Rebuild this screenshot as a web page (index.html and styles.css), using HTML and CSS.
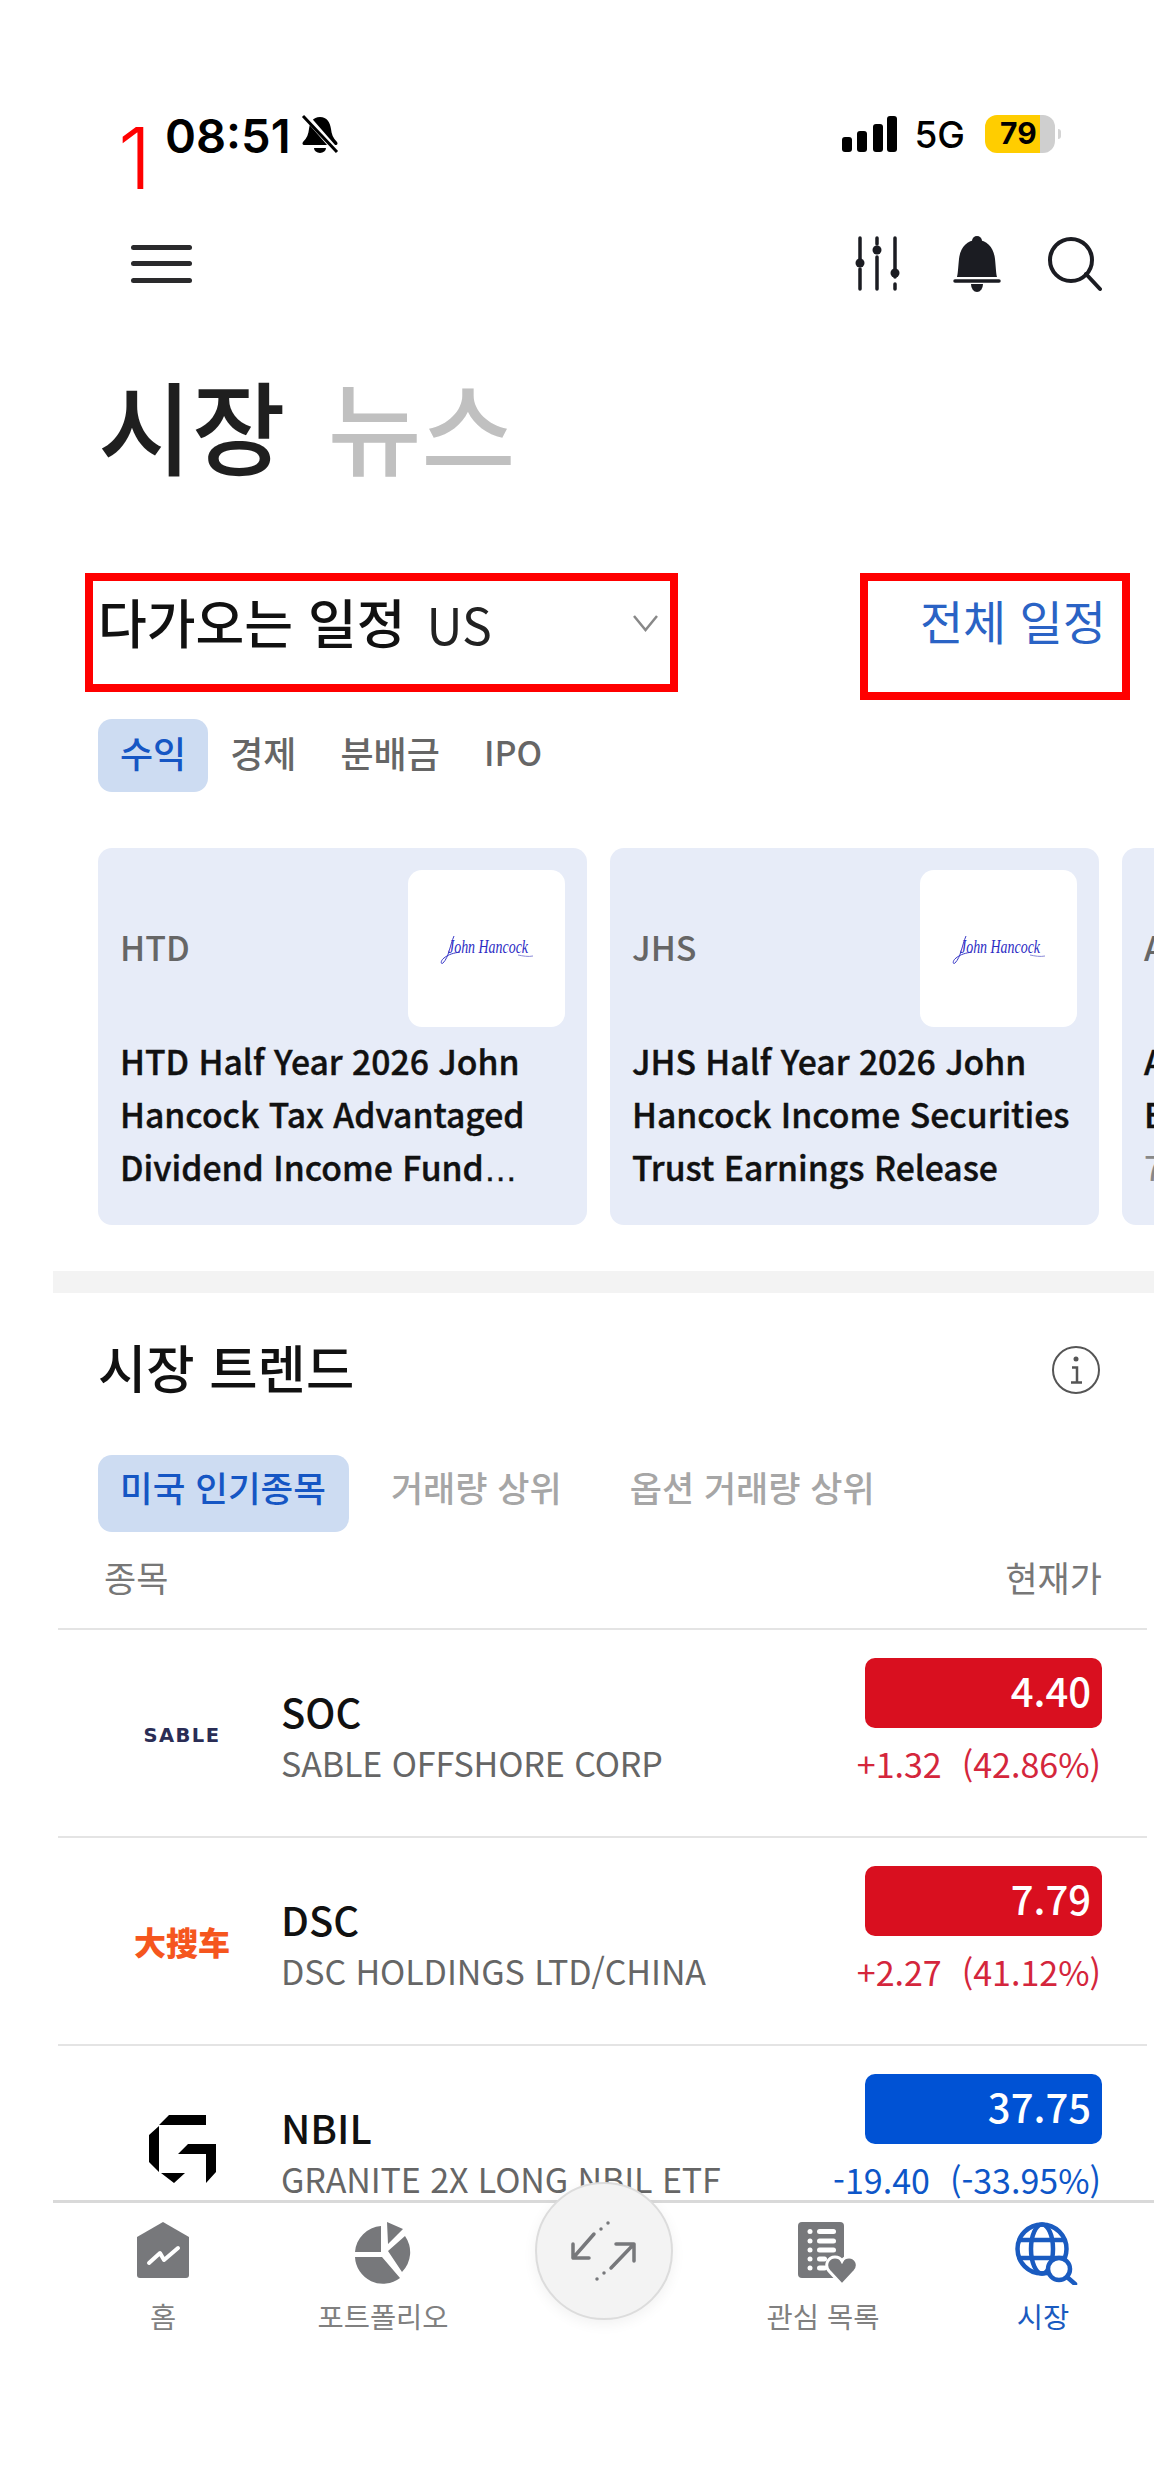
FILE: index.html
```html
<!DOCTYPE html>
<html lang="ko">
<head>
<meta charset="utf-8">
<title>시장</title>
<link rel="stylesheet" href="styles.css">
</head>
<body>
<div class="page">
  <div class="scroll">
    <div class="status">
      <div class="status-left">
        <span class="time">08:51</span>
        <svg class="muted" viewBox="0 0 38 40" width="38" height="40"><path d="M19 3c-7 0-10 5-11 12-.5 5-2 9-6 13-1 1-.5 3 1 3h32c1.500 0 2-2 1-3-4-4-5.500-8-6-13-1-7-4-12-11-12z" fill="#000"/><path d="M13 34a6 5 0 0 0 12 0z" fill="#000"/><path d="M3 0 37 39" stroke="#fff" stroke-width="6"/><path d="M2 2 36 38" stroke="#000" stroke-width="3"/></svg>
      </div>
      <div class="status-right">
        <svg viewBox="0 0 55 36" width="55" height="36"><rect x="0" y="21" width="10" height="15" rx="3"/><rect x="15" y="15" width="10" height="21" rx="3"/><rect x="31" y="8" width="10" height="28" rx="3"/><rect x="45" y="0" width="10" height="36" rx="3"/></svg>
        <span class="net">5G</span>
        <span class="battery">79</span>
      </div>
    </div>

    <div class="topbar">
      <div class="burger"><i></i><i></i><i></i></div>
      <div class="top-icons">
        <svg viewBox="0 0 46 57" width="46" height="57" fill="none" stroke="#1b1c22" stroke-width="3.500" stroke-linecap="round"><path d="M6 3V24M6 34V54M23 3V9M23 22V54M41 3V42M41 49V54"/><circle cx="6" cy="28" r="4.500" fill="#1b1c22" stroke="none"/><circle cx="23" cy="15" r="4.500" fill="#1b1c22" stroke="none"/><circle cx="41" cy="38" r="4.500" fill="#1b1c22" stroke="none"/></svg>
        <svg class="ic-bell" viewBox="0 0 50 58" width="50" height="58"><circle cx="25" cy="6" r="5" fill="#1b1c22"/><path d="M25 5C14 5 8 14 7 24 6 34 6 38 5 42H45C44 38 44 34 43 24 42 14 36 5 25 5Z" fill="#1b1c22"/><path d="M3 46H47" stroke="#1b1c22" stroke-width="3.500" stroke-linecap="round"/><path d="M19 49a6 8 0 0 0 12 0z" fill="#1b1c22"/></svg>
        <svg class="ic-search" viewBox="0 0 56 56" width="56" height="56" fill="none" stroke="#1b1c22" stroke-width="4" stroke-linecap="round"><circle cx="25" cy="24" r="21"/><path d="M40 38 54 53"/></svg>
      </div>
    </div>

    <h1 class="title"><span>시장</span><span class="title-off">뉴스</span></h1>

    <div class="sched-head">
      <div class="sched-picker">
        <div class="sched-label"><h2 class="h-big">다가오는 일정</h2><span class="us">US</span></div>
        <svg viewBox="0 0 27 18" width="27" height="18" fill="none" stroke="#888" stroke-width="2.500"><path d="M2 2 13.500 16 25 2"/></svg>
      </div>
      <a class="all-link">전체 일정</a>
    </div>

    <div class="tabs tabs-sched">
      <span class="tab active">수익</span>
      <span class="tab">경제</span>
      <span class="tab">분배금</span>
      <span class="tab tab-latin">IPO</span>
    </div>

    <div class="cards">
      <article class="card">
        <div class="card-top">
          <span class="card-tick">HTD</span>
          <div class="card-logo"><svg viewBox="0 0 94 32" width="94" height="32"><path d="M14 3C10 12 9 24 3 30 1 32 0 28 4 25 9 21 14 20 20 19" fill="none" stroke="#3a3ac8" stroke-width="1"/><text x="8" y="20" class="jh" textLength="80" lengthAdjust="spacingAndGlyphs">John Hancock</text><path d="M78 22c5 1 10 2 15 1" fill="none" stroke="#8a8ad8" stroke-width="1"/></svg></div>
        </div>
        <p class="card-text">HTD Half Year 2026 John Hancock Tax Advantaged Dividend Income Fund<span class="ell">…</span></p>
      </article>
      <article class="card">
        <div class="card-top">
          <span class="card-tick">JHS</span>
          <div class="card-logo"><svg viewBox="0 0 94 32" width="94" height="32"><path d="M14 3C10 12 9 24 3 30 1 32 0 28 4 25 9 21 14 20 20 19" fill="none" stroke="#3a3ac8" stroke-width="1"/><text x="8" y="20" class="jh" textLength="80" lengthAdjust="spacingAndGlyphs">John Hancock</text><path d="M78 22c5 1 10 2 15 1" fill="none" stroke="#8a8ad8" stroke-width="1"/></svg></div>
        </div>
        <p class="card-text">JHS Half Year 2026 John Hancock Income Securities Trust Earnings Release</p>
      </article>
      <article class="card">
        <div class="card-top">
          <span class="card-tick">AFB</span>
          <div class="card-logo"></div>
        </div>
        <p class="card-text">AFB Half Year<br>Earnings<br><span class="card-date">7월</span></p>
      </article>
    </div>

    <div class="sep"></div>

    <div class="trend-head">
      <h2 class="h-big">시장 트렌드</h2>
      <svg viewBox="0 0 50 50" width="50" height="50" fill="none" stroke="#555" stroke-width="2"><circle cx="25" cy="25" r="23"/><circle cx="25" cy="14" r="2.500" fill="#555" stroke="none"/><path d="M21 22.500H26V37M20 37.500H31" stroke-width="2.500"/></svg>
    </div>

    <div class="tabs tabs-trend">
      <span class="tab active">미국 인기종목</span>
      <span class="tab off">거래량 상위</span>
      <span class="tab off">옵션 거래량 상위</span>
    </div>

    <div class="col-head"><span>종목</span><span>현재가</span></div>

    <div class="row">
      <div class="row-logo"><span class="logo-sable">SABLE</span></div>
      <div class="row-main"><div class="tick">SOC</div><div class="name">SABLE OFFSHORE CORP</div></div>
      <div class="row-price"><div class="price up">4.40</div><div class="chg up-t"><span>+1.32</span><span>(42.86%)</span></div></div>
    </div>
    <div class="row">
      <div class="row-logo"><span class="logo-dsc">大搜车</span></div>
      <div class="row-main"><div class="tick">DSC</div><div class="name">DSC HOLDINGS LTD/CHINA</div></div>
      <div class="row-price"><div class="price up">7.79</div><div class="chg up-t"><span>+2.27</span><span>(41.12%)</span></div></div>
    </div>
    <div class="row">
      <div class="row-logo"><svg viewBox="0 0 67 68" width="67" height="68"><path d="M20 0H57V10H10ZM10 11 0 20V47L10 57ZM39 29H67L57 39H29ZM57 39 67 29V57L57 68ZM12 58H36L25 68Z" fill="#000"/></svg></div>
      <div class="row-main"><div class="tick">NBIL</div><div class="name">GRANITE 2X LONG NBIL ETF</div></div>
      <div class="row-price"><div class="price down">37.75</div><div class="chg down-t"><span>-19.40</span><span>(-33.95%)</span></div></div>
    </div>
  </div>

  <nav class="nav">
    <div class="nav-item">
      <svg viewBox="0 0 52 63" width="52" height="63"><path d="M26 0 52 15V53a3 3 0 0 1-3 3H3a3 3 0 0 1-3-3V15Z" fill="#77787b"/><path d="M12 41 23 31 27 38 41 26" fill="none" stroke="#fff" stroke-width="4" stroke-linecap="round" stroke-linejoin="round"/></svg>
      <span>홈</span>
    </div>
    <div class="nav-item">
      <svg viewBox="0 0 57 63" width="57" height="63" fill="#77787b"><path d="M26 4A28 28 0 0 0 0 30H26ZM32 0 48 7 33 22ZM50 14A28 28 0 0 1 47 50L33 29ZM0 35H27L45 56A28 28 0 0 1 0 35Z"/></svg>
      <span>포트폴리오</span>
    </div>
    <div class="nav-item nav-gap"></div>
    <div class="nav-item nav-watch">
      <svg viewBox="0 0 60 63" width="60" height="63"><rect width="46" height="56" rx="4" fill="#77787b"/><g fill="#fff"><circle cx="12" cy="9.500" r="2.500"/><circle cx="12" cy="19" r="2.500"/><circle cx="12" cy="28" r="2.500"/><circle cx="12" cy="37" r="2.500"/><circle cx="12" cy="46" r="2.500"/><rect x="19" y="7" width="19" height="5" rx="2.500"/><rect x="19" y="16.500" width="19" height="5" rx="2.500"/><rect x="19" y="25.500" width="19" height="5" rx="2.500"/><rect x="19" y="34.500" width="10" height="5" rx="2.500"/><rect x="19" y="43.500" width="10" height="5" rx="2.500"/></g><path d="M44 63 31 49C26 43 30 35 37 35 40 35 43 37 44 39 45 37 48 35 51 35 58 35 62 43 57 49Z" fill="#77787b" stroke="#fff" stroke-width="3"/></svg>
      <span>관심 목록</span>
    </div>
    <div class="nav-item nav-on">
      <svg viewBox="0 0 63 63" width="63" height="63" fill="none" stroke="#1a5bc0" stroke-width="4.500"><circle cx="27" cy="27" r="24.500"/><ellipse cx="27" cy="27" rx="11" ry="24.500"/><path d="M5 18H49M5 36H49"/><circle cx="44" cy="47" r="11" fill="#fff"/><path d="M52 55 60 62" stroke-linecap="round"/></svg>
      <span>시장</span>
    </div>
  </nav>

  <div class="swap">
    <svg viewBox="0 0 70 70" width="70" height="70" fill="none" stroke="#77787b" stroke-width="3.500" stroke-linecap="round" stroke-linejoin="round"><path d="M4 28V42H20M4 42 25 18"/><path d="M47 28H65V45M65 28 42 52"/><path d="M32 13v0M39 7v0M35 57v0M28 63v0"/></svg>
  </div>

  <div class="mark mark-num">1</div>
  <div class="mark mark-box mark-a"></div>
  <div class="mark mark-box mark-b"></div>
</div>
</body>
</html>
```

FILE: styles.css
```css
* { box-sizing: border-box; }
html, body { margin: 0; padding: 0; background: #fff; }
body { font-family: "Noto Sans CJK KR", "Noto Sans", sans-serif; color: #1a1a1a; }
h1, h2, p { margin: 0; font: inherit; }

.page { position: relative; width: 1154px; height: 2489px; overflow: hidden; background: #fff; }
.scroll { height: 2200px; overflow: hidden; padding-top: 115px; }

.status { display: flex; justify-content: space-between; align-items: center; height: 38px; padding: 0 99px 0 165px; }
.status-left { display: flex; align-items: center; gap: 10px; }
.time { margin-top: 3px; font-family: Inter, sans-serif; font-weight: 600; font-size: 47px; line-height: 38px; color: #000; }
.status-right { display: flex; align-items: center; gap: 17px; }
.net { margin: 2px 3px 0 0; font-family: Inter, sans-serif; font-weight: 500; font-size: 37px; line-height: 38px; color: #000; }
.battery { position: relative; display: block; width: 70px; height: 38px; padding-left: 15px; border-radius: 12px; background: linear-gradient(90deg, #ffcd00 78.500%, #cfcfcf 78.500%); font-family: Inter, sans-serif; font-weight: 700; font-size: 30px; line-height: 37px; color: #000; }
.battery::after { content: ""; position: absolute; right: -6px; top: 14px; width: 3px; height: 10px; border-radius: 0 3px 3px 0; background: #d4d4d4; }

.topbar { display: flex; justify-content: space-between; align-items: center; height: 57px; margin-top: 82px; padding: 0 52px 0 131px; }
.burger { display: flex; flex-direction: column; gap: 11.500px; width: 61px; }
.burger i { display: block; height: 5px; border-radius: 3px; background: #2a2a2c; }
.top-icons { display: flex; align-items: center; }
.ic-bell { margin-left: 52px; }
.ic-search { margin-left: 44px; }

.title { display: flex; gap: 42px; height: 100px; margin-top: 82px; padding-left: 98px; font-size: 102px; line-height: 100px; font-weight: 500; color: #1f1f1f; }
.title-off { color: #c0c0c0; }

.sched-head { display: flex; justify-content: space-between; align-items: center; height: 62px; margin-top: 118px; padding: 0 48px 0 98px; }
.sched-picker { display: flex; justify-content: space-between; align-items: center; width: 561px; }
.sched-label { display: flex; align-items: center; gap: 21px; }
.h-big { font-size: 53px; line-height: 62px; font-weight: 500; color: #111; }
.sched-label .h-big { margin-top: -5px; }
.us { font-size: 50px; line-height: 62px; color: #222; }
.all-link { margin-top: -6px; font-size: 47px; line-height: 62px; color: #2a63c5; }

.tabs { display: flex; align-items: center; margin-left: 98px; }
.tabs-sched { height: 73px; margin-top: 65px; }
.tabs-trend { gap: 16px; height: 77px; margin-top: 55px; }
.tab { display: flex; align-items: center; height: 100%; padding: 0 22px; border-radius: 14px; font-size: 36px; font-weight: 500; color: #666; }
.tabs-sched .tab { padding-bottom: 8px; }
.tabs-trend .tab { padding: 0 23px 14px 22px; font-size: 35.500px; }
.tab-latin { font-size: 34px; }
.tab.active { background: #cddcf2; color: #1556c4; }
.tabs-trend .tab.off { padding: 0 26px 14px; font-size: 35px; color: #a6a6a6; }

.cards { display: flex; gap: 23px; height: 377px; margin-top: 56px; margin-left: 98px; }
.card { flex: 0 0 489px; height: 377px; padding: 22px 22px 0; border-radius: 14px; background: #e7ecf8; }
.card-top { display: flex; justify-content: space-between; align-items: center; height: 157px; }
.card-tick { margin-top: -5px; font-size: 34px; font-weight: 500; color: #666; }
.card-logo { display: flex; align-items: center; justify-content: center; width: 157px; height: 157px; border-radius: 14px; background: #fff; }
.jh { font-family: "Liberation Serif", serif; font-style: italic; font-size: 19px; fill: #2c2cc4; }
.card-text { margin-top: 7px; font-size: 33.700px; line-height: 53px; font-weight: 500; color: #111; -webkit-text-stroke: 0.4px #111; }
.ell { font-family: "Liberation Sans", sans-serif; }
.card-date { color: #888; font-weight: 400; -webkit-text-stroke: 0; }

.sep { height: 22px; margin-top: 46px; margin-left: 53px; background: #f3f3f3; }

.trend-head { display: flex; justify-content: space-between; align-items: center; height: 60px; margin-top: 47px; padding: 0 53px 0 98px; }
.trend-head .h-big { margin-top: -8px; font-size: 52.500px; }

.col-head { display: flex; justify-content: space-between; align-items: center; height: 98px; margin: 0 7px 0 58px; padding: 0 45px 8px 46px; border-bottom: 2px solid #e4e4e4; font-size: 35px; color: #777; }

.row { display: grid; grid-template-columns: 156px 1fr auto; column-gap: 21px; height: 208px; margin: 0 7px 0 58px; padding: 0 45px 0 46px; border-bottom: 2px solid #e4e4e4; }
.row-logo { display: flex; align-items: center; justify-content: center; height: 206px; }
.logo-sable { margin-top: 5px; font-family: "DejaVu Sans", sans-serif; font-weight: 700; font-size: 19.500px; letter-spacing: 1.500px; color: #2a2d55; }
.logo-dsc { font-family: "Noto Sans CJK SC", sans-serif; font-weight: 900; font-size: 32px; line-height: 32px; color: #f5561e; }
.row-main { padding-top: 54px; }
.tick { font-size: 40px; line-height: 54px; font-weight: 500; color: #111; }
.name { font-size: 34px; line-height: 50px; letter-spacing: -0.100px; color: #666; white-space: nowrap; }
.row-price { display: flex; flex-direction: column; align-items: flex-end; padding-top: 28px; }
.price { width: 237px; height: 70px; padding-right: 11px; border-radius: 10px; font-size: 40px; line-height: 64px; font-weight: 500; text-align: right; color: #fff; }
.price.up { background: #d90f1f; }
.price.down { background: #0052d4; }
.chg { display: flex; gap: 20px; margin-top: 10px; padding-right: 1px; font-size: 34px; line-height: 52px; white-space: nowrap; }
.up-t { color: #d4263c; }
.down-t { color: #0d56c8; }

.nav { display: grid; grid-template-columns: repeat(5, 220px); height: 289px; margin-left: 53px; border-top: 3px solid #d9d9d9; background: #fff; }
.nav-item { display: flex; flex-direction: column; align-items: center; padding-top: 19px; font-size: 28.500px; line-height: 40px; color: #808080; }
.nav-item svg { display: block; }
.nav-item span { margin-top: 11px; white-space: nowrap; }
.nav-watch svg { margin-left: 10px; }
.nav-on { color: #1a5bc0; }
.nav-on svg { margin-left: 6px; }

.swap { position: absolute; left: 535px; top: 2182px; display: flex; align-items: center; justify-content: center; width: 138px; height: 138px; border-radius: 50%; border: 2px solid #dcdcdc; background: #f3f3f3; box-shadow: 0 4px 14px rgba(0, 0, 0, 0.06); }

.mark { position: absolute; }
.mark-num { left: 118px; top: 111px; font-family: Inter, sans-serif; font-weight: 350; font-size: 85px; line-height: 96px; color: #f00; }
.mark-box { border: 8px solid #f00; }
.mark-a { left: 85px; top: 573px; width: 593px; height: 119px; }
.mark-b { left: 860px; top: 573px; width: 270px; height: 127px; }
```
